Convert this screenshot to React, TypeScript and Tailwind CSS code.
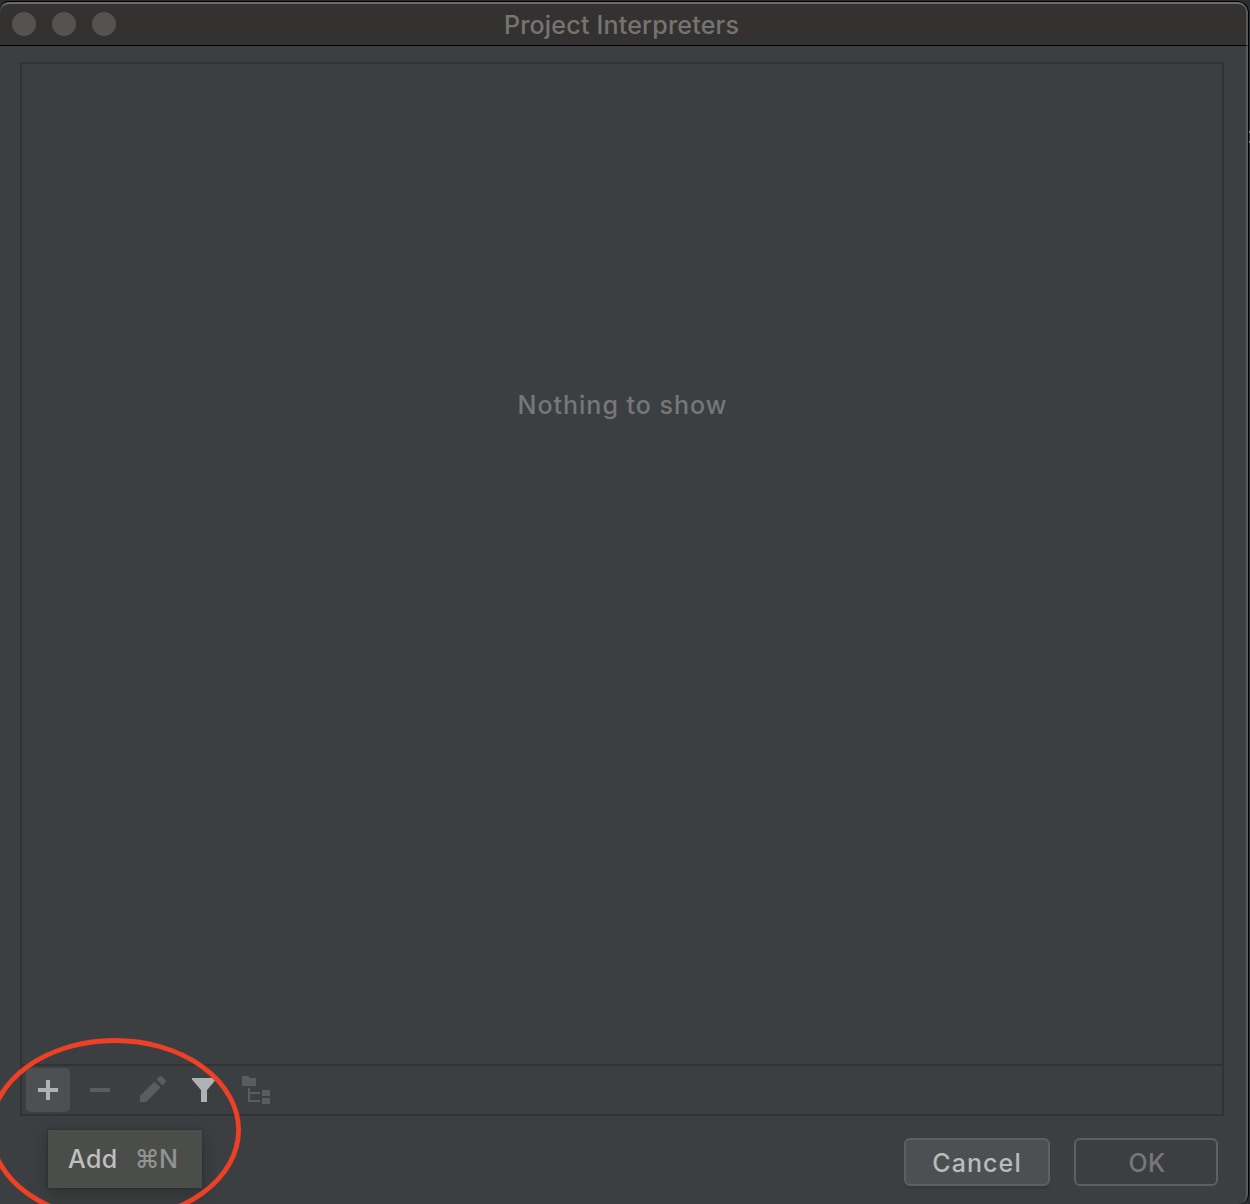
function PlusIcon() {
  return (
    <svg width="20" height="20" viewBox="0 0 20 20" fill="#afb1b3">
      <path d="M8 0h4v8h8v4h-8v8H8v-8H0V8h8z" />
    </svg>
  );
}

function PencilIcon() {
  return (
    <svg width="26" height="26" viewBox="0 0 26 26" fill="#5c5c5c">
      <path d="M0 20 14.500 5.500l6 6L6 26H0z" />
      <path d="m16.500 3.500 2.800-2.800a2 2 0 0 1 2.800 0l3.200 3.200a2 2 0 0 1 0 2.800l-2.800 2.800z" />
    </svg>
  );
}

function FilterIcon() {
  return (
    <svg width="24" height="24" viewBox="0 0 24 24" fill="#afb1b3">
      <path d="M0 0h24v1.500L15 12v12H9V12L0 1.500z" />
    </svg>
  );
}

function TreeIcon() {
  return (
    <svg width="28" height="28" viewBox="0 0 28 28" fill="#5c5c5c">
      <path d="M0 0h6l2 2h6v8H0z" />
      <path d="M6 12h2v4h10v2H8v6h10v2H6z" />
      <path d="M20 14h8v6h-8zM20 22h8v6h-8z" />
    </svg>
  );
}

function TitleBar() {
  return (
    <header className="relative flex h-11 shrink-0 items-center rounded-t-[10px] border-t-2 border-r-2 border-b border-t-[#6c6b68] border-r-[#58595a] border-b-black bg-[#343230]">
      <div className="flex gap-4 pb-px pl-3">
        <span className="size-6 rounded-full bg-[#545351]" />
        <span className="size-6 rounded-full bg-[#545351]" />
        <span className="size-6 rounded-full bg-[#545351]" />
      </div>
      <h1 className="absolute inset-x-0 top-[5px] pr-[3px] text-center text-[25px] leading-[32px] font-[450] tracking-[0.2px] text-[#757472]">
        Project Interpreters
      </h1>
    </header>
  );
}

function Tooltip() {
  return (
    <div className="absolute top-[62px] left-[22px] flex h-[58px] w-[154px] items-center gap-[17px] bg-[#4b4d4b] pt-[2px] pl-5 text-[25px] font-[450] tracking-[0.4px] text-[#bfbfbf] shadow-[0_0_2px_#242627,0_6px_18px_rgba(0,0,0,0.25)]">
      <span>Add</span>
      <span className="tracking-[-0.4px] text-[#939391]">⌘N</span>
    </div>
  );
}

export default function App() {
  return (
    <div className="relative flex h-[1204px] w-[1250px] overflow-hidden bg-[#292c30] pt-px font-['Inter',sans-serif]">
      <div className="flex h-[1203px] w-[1249px] flex-col overflow-hidden rounded-tl-[8px] rounded-tr-[12px] rounded-br-[10px] border-t border-r border-black bg-[#3c3f41]">
        <TitleBar />
        <main className="flex flex-1 flex-col rounded-br-[9px] border-r-2 border-[#58595a] pt-4 pr-[22px] pl-5">
          <section className="flex h-[1054px] flex-col border-2 border-[#323232]">
            <div className="flex h-[1000px] justify-center pt-[325px] pl-px text-[25px] leading-[32px] font-[450] tracking-[1px] text-[#777777]">
              Nothing to show
            </div>
            <div className="flex h-[50px] border-t-2 border-[#323232] pt-[2px] pl-1">
              <div className="relative size-11 rounded-[5px] bg-[#4c5052]">
                <div className="flex size-full items-center justify-center">
                  <PlusIcon />
                </div>
                <Tooltip />
              </div>
              <div className="mt-5 ml-5 h-1 w-5 bg-[#5c5c5c]" />
              <div className="mt-2 ml-[30px]">
                <PencilIcon />
              </div>
              <div className="mt-[10px] ml-[26px]">
                <FilterIcon />
              </div>
              <div className="mt-2 ml-[26px]">
                <TreeIcon />
              </div>
            </div>
          </section>
          <footer className="flex justify-end gap-6 pt-[22px] pr-[6px]">
            <button className="h-12 w-[146px] rounded-[6px] border-2 border-[#5e6060] bg-[#4c5052] pt-[3px] text-[25px] font-[450] tracking-[1.1px] text-[#bbbbbb] shadow-[0_3px_0_#36383a]">
              Cancel
            </button>
            <button className="h-12 w-[144px] rounded-[6px] border-2 border-[#5e6060] pt-[3px] pl-[2px] text-[25px] font-[450] tracking-[0.2px] text-[#777777]">
              OK
            </button>
          </footer>
        </main>
      </div>
      <div className="absolute top-[131px] right-0 h-[2px] w-px bg-[#8a8c8e]" />
      <div className="absolute top-[141px] right-0 h-[2px] w-px bg-[#8a8c8e]" />
      <svg className="pointer-events-none absolute bottom-0 left-0" width="250" height="174" viewBox="0 1030 250 174">
        <ellipse cx="114.800" cy="1130" rx="123.800" ry="89.500" fill="none" stroke="#ee4025" strokeWidth="4.800" />
      </svg>
    </div>
  );
}
